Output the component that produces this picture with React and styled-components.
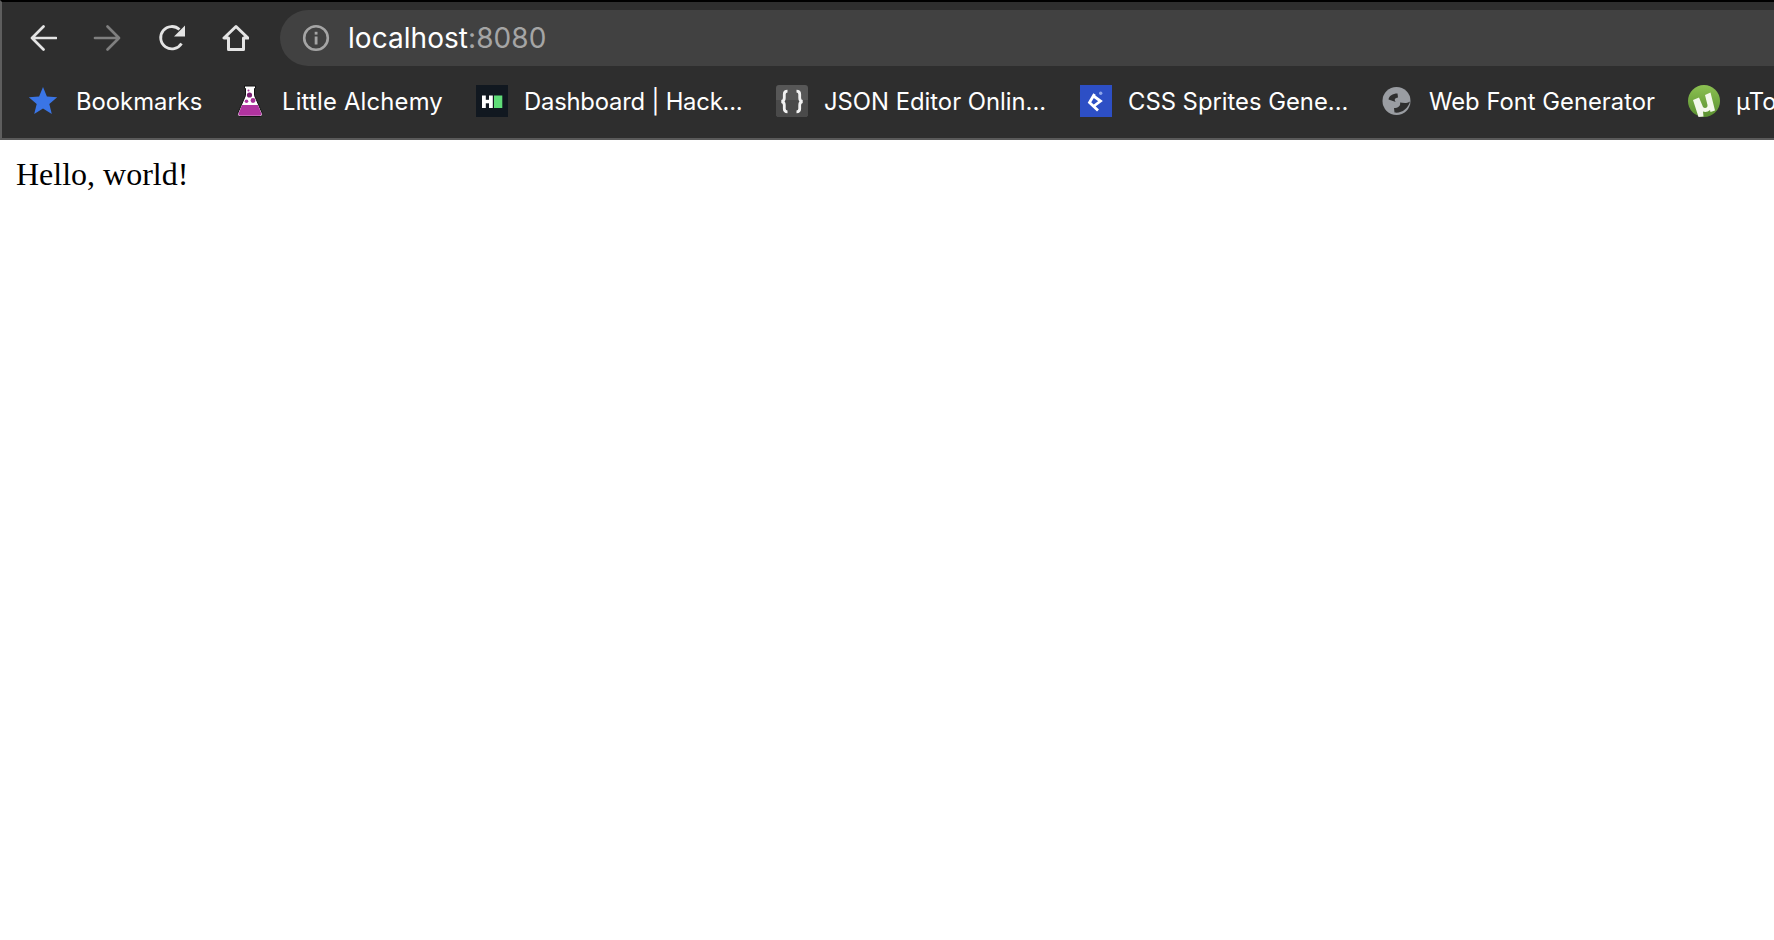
import styled, { createGlobalStyle } from "styled-components";

const GlobalStyle = createGlobalStyle`
  html, body {
    margin: 0;
    padding: 0;
    background: #fff;
    overflow: hidden;
  }
`;

const Page = styled.div`
  width: 1774px;
  height: 940px;
  overflow: hidden;
`;

const Chrome = styled.div`
  height: 140px;
  box-sizing: border-box;
  background: #2e2e2e;
  border-top: 2px solid #000;
  border-left: 2px solid #5e5e5e;
  border-bottom: 2px solid #5a5a5a;
  font-family: Inter, "Liberation Sans", sans-serif;
  color: #fff;
  overflow: hidden;
`;

const Toolbar = styled.div`
  display: flex;
  align-items: center;
  height: 56px;
  margin-top: 8px;
  padding-left: 27px;
`;

const NavButton = styled.div`
  width: 28px;
  height: 28px;
  margin-right: 36px;
  color: ${(p) => (p.$dim ? "#7f7f7f" : "#e4e4e4")};
  svg {
    display: block;
  }
`;

const Omnibox = styled.div`
  flex: 1;
  height: 56px;
  margin-left: -5px;
  margin-right: -60px;
  padding-left: 22px;
  display: flex;
  align-items: center;
  background: #414141;
  border-radius: 28px;
`;

const Url = styled.div`
  margin-left: 18px;
  font-size: 28px;
  letter-spacing: 0.05px;
  color: #fff;
`;

const Port = styled.span`
  color: #a5a5a5;
`;

const Bookmarks = styled.div`
  display: flex;
  align-items: center;
  height: 70px;
  padding-left: 26px;
  white-space: nowrap;
`;

const Bookmark = styled.div`
  display: flex;
  align-items: center;
  flex: none;
  width: ${(p) => p.$w}px;
  gap: 16px;
  font-size: 23.8px;
  letter-spacing: ${(p) => p.$track || 0}px;
`;

const Fav = styled.div`
  width: 32px;
  height: 32px;
  flex: none;
  svg {
    display: block;
  }
`;

const Content = styled.div`
  padding: 16px 16px;
  font-family: "Liberation Serif", "Times New Roman", serif;
  font-size: 32px;
  line-height: 37px;
  color: #000;
`;

const Back = () => (
  <svg width="28" height="28" viewBox="0 0 28 28" fill="none" stroke="currentColor" strokeWidth="2.7" strokeLinecap="round" strokeLinejoin="round">
    <path d="M27 14H3M14.500 2.500 3 14l11.500 11.500" />
  </svg>
);

const Forward = () => (
  <svg width="28" height="28" viewBox="0 0 28 28" fill="none" stroke="currentColor" strokeWidth="2.7" strokeLinecap="round" strokeLinejoin="round">
    <path d="M2 14h24M14.500 2.500 26 14 14.500 25.500" />
  </svg>
);

const Reload = () => (
  <svg width="28" height="28" viewBox="0 0 28 28" fill="none">
    <path d="M24.500 19.500A11.200 11.200 0 1 1 22.500 5.500" stroke="currentColor" strokeWidth="2.800" />
    <path d="M28 1.500V12.500H17z" fill="currentColor" />
  </svg>
);

const Home = () => (
  <svg width="28" height="28" viewBox="0 0 28 28" fill="none" stroke="currentColor" strokeWidth="3" strokeLinejoin="round">
    <path d="M15 2.500 3 14h4.500v11.500h15V14H27z" />
  </svg>
);

const Info = () => (
  <svg width="28" height="28" viewBox="0 0 28 28" fill="none">
    <circle cx="14" cy="14" r="11.800" stroke="#a5a5a5" strokeWidth="2.600" />
    <rect x="12.700" y="12.500" width="2.800" height="8" fill="#a5a5a5" />
    <rect x="12.700" y="7.800" width="2.800" height="2.800" fill="#a5a5a5" />
  </svg>
);

const Star = () => (
  <svg width="32" height="32" viewBox="0 0 32 32">
    <path d="M15 2l3.900 9.600 10.300.7-7.900 6.600 2.500 10L15 23.400l-8.800 5.500 2.500-10-7.900-6.600 10.300-.7z" fill="#3a75e6" />
  </svg>
);

const Flask = () => (
  <svg width="32" height="32" viewBox="0 0 32 32">
    <path d="M10.500 1h11v2.500h-1v7l7.600 17.500c.7 2-.3 3.500-2 3.500H5.900c-1.700 0-2.700-1.500-2-3.500l7.600-17.500v-7h-1z" fill="#fff" stroke="#111" strokeWidth="1" />
    <path d="M8 20h16l3.300 8.200c.5 1.500-.2 2.500-1.500 2.500H6.200c-1.300 0-2-1-1.500-2.500z" fill="#b0339f" />
    <circle cx="12.500" cy="16.300" r="1.800" fill="#b0339f" />
    <circle cx="15.500" cy="10" r="2.600" fill="#7c1f74" />
    <circle cx="19" cy="15.500" r="2.400" fill="#a42d94" />
    <circle cx="14.500" cy="5.500" r="1" fill="#b0339f" />
  </svg>
);

const HackerRank = () => (
  <svg width="32" height="32" viewBox="0 0 32 32">
    <rect width="32" height="32" fill="#111820" />
    <rect x="6" y="10.500" width="3.800" height="12.500" fill="#fff" />
    <rect x="13" y="10.500" width="3.800" height="12.500" fill="#fff" />
    <rect x="9" y="14.800" width="5" height="3.500" fill="#fff" />
    <rect x="18" y="10.500" width="8.300" height="12.500" fill="#5fdc78" />
  </svg>
);

const Braces = () => (
  <svg width="32" height="32" viewBox="0 0 32 32">
    <rect width="32" height="32" rx="3" fill="#575757" />
    <path d="M0 15h32v14a3 3 0 0 1-3 3H3a3 3 0 0 1-3-3z" fill="#4a4a4a" />
    <path d="M11.500 6.200c-2.500 0-3.200 1-3.200 3v3.800c0 2-.9 3.200-2.800 3.500 1.900.3 2.800 1.500 2.800 3.500v3.800c0 2 .7 3 3.200 3M20.500 6.200c2.500 0 3.200 1 3.200 3v3.800c0 2 .9 3.200 2.800 3.500-1.900.3-2.800 1.500-2.800 3.500v3.800c0 2-.7 3-3.200 3" fill="none" stroke="#f2f2f2" strokeWidth="2.800" />
  </svg>
);

const Toptal = () => (
  <svg width="32" height="32" viewBox="0 0 32 32">
    <rect width="32" height="32" fill="#2d4fc5" />
    <path d="M14.500 9 9.500 17.500 18 25.500M13.500 11l7 5-6.500 5" fill="none" stroke="#fff" strokeWidth="2.800" />
    <circle cx="20.700" cy="8.300" r="1.700" fill="#8fa6ea" />
  </svg>
);

const Globe = () => (
  <svg width="32" height="32" viewBox="0 0 32 32">
    <circle cx="15.500" cy="16" r="14" fill="#9a9da2" />
    <path d="M16.500 8.500C11.500 8.500 8 11 7.500 14.500L14.800 17C13 15 13.500 13 17 12.500z" fill="#2e2e2e" />
    <path d="M29 16.500C25 19 21.500 17.500 19 17.500 20 21 17 23 13 23L13.500 27.500C20.500 28.500 27 24 29 16.500z" fill="#2e2e2e" />
  </svg>
);

const Torrent = () => (
  <svg width="32" height="32" viewBox="0 0 32 32">
    <defs>
      <linearGradient id="utorrent" x1="0" y1="0" x2="0" y2="1">
        <stop offset="0" stopColor="#8cc152" />
        <stop offset="1" stopColor="#5a9030" />
      </linearGradient>
    </defs>
    <circle cx="16" cy="16" r="16" fill="url(#utorrent)" />
    <path d="M5 15l6-2.500 4 9.500c1.500 2 5 1 4.500-2L17 10l5.500-2.500 4.500 18-4.500 1.500-.5-2c-2 2-5 2.500-7 1.500l.5 5-5 .5z" fill="#f4f8ec" />
  </svg>
);

const items = [
  { w: 206, icon: <Star />, label: "Bookmarks" },
  { w: 242, icon: <Flask />, label: "Little Alchemy", track: 0.2 },
  { w: 300, icon: <HackerRank />, label: "Dashboard | Hack...", track: -0.2 },
  { w: 304, icon: <Braces />, label: "JSON Editor Onlin..." },
  { w: 301, icon: <Toptal />, label: "CSS Sprites Gene..." },
  { w: 307, icon: <Globe />, label: "Web Font Generator" },
  { w: 200, icon: <Torrent />, label: "µTorrent" },
];

export default function App() {
  return (
    <Page>
      <GlobalStyle />
      <Chrome>
        <Toolbar>
          <NavButton><Back /></NavButton>
          <NavButton $dim><Forward /></NavButton>
          <NavButton><Reload /></NavButton>
          <NavButton><Home /></NavButton>
          <Omnibox>
            <Info />
            <Url>localhost<Port>:8080</Port></Url>
          </Omnibox>
        </Toolbar>
        <Bookmarks>
          {items.map((item) => (
            <Bookmark key={item.label} $w={item.w} $track={item.track}>
              <Fav>{item.icon}</Fav>
              {item.label}
            </Bookmark>
          ))}
        </Bookmarks>
      </Chrome>
      <Content>Hello, world!</Content>
    </Page>
  );
}
